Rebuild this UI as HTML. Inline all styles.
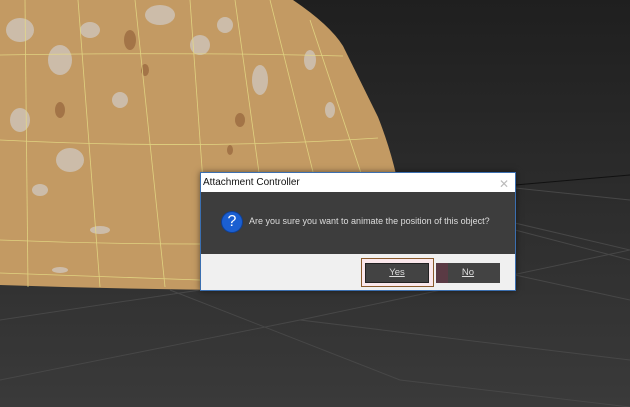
<!DOCTYPE html>
<html><head><meta charset="utf-8"><style>
body{margin:0;width:630px;height:407px;overflow:hidden;background:linear-gradient(#1f1f1f,#2a2a2a 40%,#3a3a3a);font-family:"Liberation Sans",sans-serif;position:relative}
svg{position:absolute;left:0;top:0}
.dlg{position:absolute;left:200px;top:172px;width:314px;height:117px;border:1px solid #3b6fb0;background:#f0f0f0;box-shadow:0 0 6px rgba(0,0,0,.5)}
.title{height:19px;background:#fff;font-size:10px;line-height:19px;padding-left:2px;color:#111}
.x{position:absolute;right:6px;top:2px;color:#bbb;font-size:12px}
.body{height:62px;background:#3d3d3d;position:relative}
.ic{position:absolute;left:21px;top:20px;width:20px;height:20px;border-radius:50%;background:#1b5fd1;color:#fff;font-size:16px;text-align:center;line-height:20px;box-shadow:0 0 0 1px #0e3f95}
.msg{position:absolute;left:48px;top:24px;font-size:9px;color:#ddd}
.ybox{position:absolute;left:160px;top:85px;width:71px;height:27px;border:1px solid #8a5a2a;background:#fbe8ec}
.btn{position:absolute;top:90px;height:20px;background:#434343;color:#ddd;font-size:9.5px;text-align:center;line-height:20px;text-decoration:underline}
</style></head><body>
<svg width="630" height="407">
<g stroke="#474747" stroke-width="1" fill="none">
<path d="M390 175 L630 200"/><path d="M395 195 L630 250"/><path d="M515 230 L630 260"/><path d="M515 275 L630 300"/>
<path d="M170 290 L400 380 L630 407"/><path d="M0 380 L300 320 L630 250"/><path d="M0 320 L200 290"/><path d="M300 320 L630 360"/>
</g>
<path d="M515 185 L630 175" stroke="#111" stroke-width="1"/>
<path d="M0 0 L293 0 Q330 25 343 46 L378 117 Q395 160 402 205 L402 290 Q200 292 0 285 Z" fill="#c39a63"/>
<g fill="#d3d4d8" opacity=".6">
<ellipse cx="20" cy="30" rx="14" ry="12"/><ellipse cx="60" cy="60" rx="12" ry="15"/><ellipse cx="90" cy="30" rx="10" ry="8"/><ellipse cx="160" cy="15" rx="15" ry="10"/><ellipse cx="200" cy="45" rx="10" ry="10"/><ellipse cx="225" cy="25" rx="8" ry="8"/><ellipse cx="260" cy="80" rx="8" ry="15"/><ellipse cx="70" cy="160" rx="14" ry="12"/><ellipse cx="20" cy="120" rx="10" ry="12"/><ellipse cx="310" cy="60" rx="6" ry="10"/><ellipse cx="120" cy="100" rx="8" ry="8"/><ellipse cx="40" cy="190" rx="8" ry="6"/><ellipse cx="100" cy="230" rx="10" ry="4"/><ellipse cx="60" cy="270" rx="8" ry="3"/><ellipse cx="330" cy="110" rx="5" ry="8"/>
</g>
<g fill="#7d4826" opacity=".45"><ellipse cx="130" cy="40" rx="6" ry="10"/><ellipse cx="60" cy="110" rx="5" ry="8"/><ellipse cx="240" cy="120" rx="5" ry="7"/><ellipse cx="145" cy="70" rx="4" ry="6"/><ellipse cx="230" cy="150" rx="3" ry="5"/></g>
<g stroke="#e6dc86" stroke-width=".8" fill="none" opacity=".85">
<path d="M0 55 Q200 52 343 56"/><path d="M0 140 Q200 150 378 138"/><path d="M0 240 Q200 248 402 240"/><path d="M0 273 L200 280"/>
<path d="M25 0 L28 287"/><path d="M78 0 L100 287"/><path d="M135 0 L165 287"/><path d="M190 0 L210 280"/><path d="M235 0 L260 180"/><path d="M270 0 L320 200"/><path d="M310 20 L370 200"/>
</g>
</svg>
<div class="dlg">
<div class="title">Attachment Controller<span class="x">✕</span></div>
<div class="body"><div class="ic">?</div><div class="msg">Are you sure you want to animate the position of this object?</div></div>
<div class="ybox"></div>
<div class="btn" style="left:164px;width:64px;box-shadow:inset 0 0 0 1px #222">Yes</div>
<div class="btn" style="left:235px;width:64px;background:linear-gradient(90deg,#5a3a44 0 12px,#434343 12px)">No</div>
</div>
</body></html>
